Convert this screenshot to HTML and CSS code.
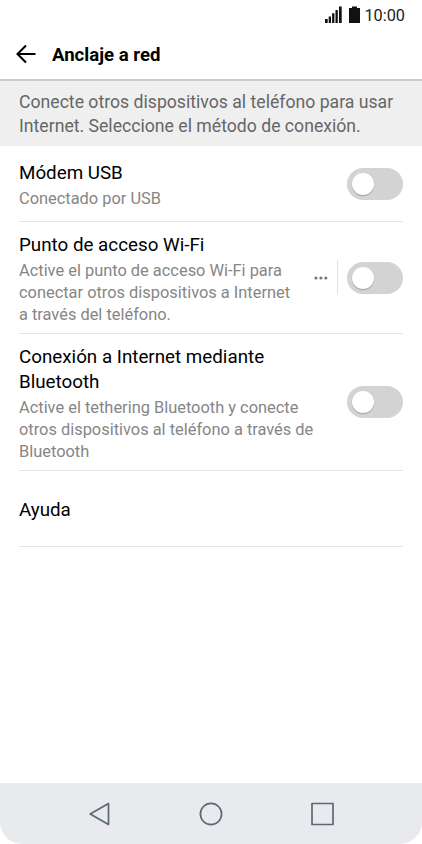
FILE: index.html
```
<!DOCTYPE html>
<html lang="es">
<head>
<meta charset="UTF-8">
<meta name="viewport" content="width=device-width, initial-scale=1">
<title>Anclaje a red</title>
<link rel="stylesheet" href="styles.css">
</head>
<body>
<div class="phone">
    <div class="status-bar">
        <svg class="signal" width="17" height="17" viewBox="0 0 17 17">
            <path d="M0 13h2.700v4H0zM3.700 10.500h2.300V17H3.700zM7.100 7.300h2.300V17H7.100zM10.500 4h2.300v13h-2.300zM14 0.500h2.700V17H14z"/>
        </svg>
        <svg class="battery" width="11" height="17" viewBox="0 0 11 17">
            <path d="M3 0.500h5v1.500h3v15H0V2h3z"/>
        </svg>
        <span class="time">10:00</span>
    </div>

    <header class="header">
        <svg class="back" width="20" height="20" viewBox="0 0 20 20">
            <path d="M19.500 10H2M10 1.500L1.500 10l8.500 8.500"/>
        </svg>
        <h1>Anclaje a red</h1>
    </header>

    <p class="intro">Conecte otros dispositivos al teléfono para usar<br>Internet. Seleccione el método de conexión.</p>

    <div class="list">
        <div class="item usb">
            <div class="text">
                <h2>Módem USB</h2>
                <p>Conectado por USB</p>
            </div>
            <button class="switch" aria-label="Módem USB"></button>
        </div>
        <div class="item wifi">
            <div class="text">
                <h2>Punto de acceso Wi-Fi</h2>
                <p>Active el punto de acceso Wi-Fi para<br>conectar otros dispositivos a Internet<br>a través del teléfono.</p>
            </div>
            <svg class="more" width="14" height="4" viewBox="0 0 14 4">
                <circle cx="2" cy="2" r="1.600"/>
                <circle cx="6.900" cy="2" r="1.600"/>
                <circle cx="11.800" cy="2" r="1.600"/>
            </svg>
            <span class="divider"></span>
            <button class="switch" aria-label="Punto de acceso Wi-Fi"></button>
        </div>
        <div class="item bluetooth">
            <div class="text">
                <h2>Conexión a Internet mediante<br>Bluetooth</h2>
                <p>Active el tethering Bluetooth y conecte<br>otros dispositivos al teléfono a través de<br>Bluetooth</p>
            </div>
            <button class="switch" aria-label="Bluetooth"></button>
        </div>
        <div class="item help">
            <div class="text">
                <h2>Ayuda</h2>
            </div>
        </div>
    </div>

    <nav class="nav-bar">
        <svg width="24" height="24" viewBox="0 0 24 24"><path d="M3.200 12L21.500 1.600v20.800z"/></svg>
        <svg width="24" height="24" viewBox="0 0 24 24"><circle cx="12" cy="12" r="10.600"/></svg>
        <svg width="24" height="24" viewBox="0 0 24 24"><path d="M1 1.500h21v21H1z"/></svg>
    </nav>
</div>
</body>
</html>
```
FILE: styles.css
```
* {
    margin: 0;
    padding: 0;
    box-sizing: border-box;
}

body {
    background: #fff;
    font-family: Roboto, Arial, sans-serif;
    color: #000;
}

.phone {
    width: 422px;
    height: 844px;
    display: flex;
    flex-direction: column;
    overflow: hidden;
}

/* Status bar */
.status-bar {
    height: 29px;
    display: flex;
    justify-content: flex-end;
    align-items: center;
    padding-right: 17px;
    fill: #111;
}

.signal {
    margin-right: 7px;
}

.battery {
    margin-right: 4px;
}

.time {
    padding-top: 1px;
    font-size: 16.3px;
    color: #222;
}

/* Header */
.header {
    height: 52px;
    display: flex;
    align-items: center;
    padding-left: 16px;
    border-bottom: 2px solid #cbcbcb;
}

.back {
    margin-right: 16px;
    margin-bottom: 1px;
    fill: none;
    stroke: #000;
    stroke-width: 2.1;
}

.header h1 {
    padding-top: 2px;
    font-size: 18.6px;
    font-weight: 700;
}

.intro {
    height: 65px;
    padding: 10px 19px 0;
    background: #efefef;
    color: #666;
    font-size: 17.65px;
    line-height: 23.5px;
    white-space: nowrap;
}

/* Options */
.list {
    flex: 1;
    padding: 0 19px;
}

.item {
    display: flex;
    align-items: center;
    border-bottom: 1px solid #e5e5e5;
}

.usb {
    height: 76px;
}

.wifi {
    height: 112px;
}

.bluetooth {
    height: 137px;
}

.help {
    height: 76px;
}

.text {
    flex: 1;
    padding-top: 4px;
    white-space: nowrap;
}

.item h2 {
    font-size: 18.8px;
    font-weight: 400;
    line-height: 25px;
}

.item p {
    font-size: 16.4px;
    line-height: 22px;
    color: #868686;
    margin-top: 2px;
}

.more {
    margin-right: 9px;
    fill: #777;
}

.divider {
    width: 1px;
    height: 35px;
    margin-right: 9px;
    background: #e2e2e2;
}

.switch {
    width: 56px;
    height: 32px;
    padding: 5px;
    border: none;
    border-radius: 16px;
    background: #d3d3d3;
}

.switch::before {
    content: "";
    display: block;
    width: 22px;
    height: 22px;
    border-radius: 50%;
    background: #fff;
    box-shadow: 0 1px 1px rgba(0, 0, 0, 0.25);
}

/* Navigation bar */
.nav-bar {
    height: 61px;
    display: flex;
    justify-content: center;
    align-items: center;
    gap: 88px;
    background: #e8eaed;
    border-radius: 0 0 22px 22px;
    fill: none;
    stroke: #596a73;
    stroke-width: 1.7;
    stroke-linejoin: round;
}
```
